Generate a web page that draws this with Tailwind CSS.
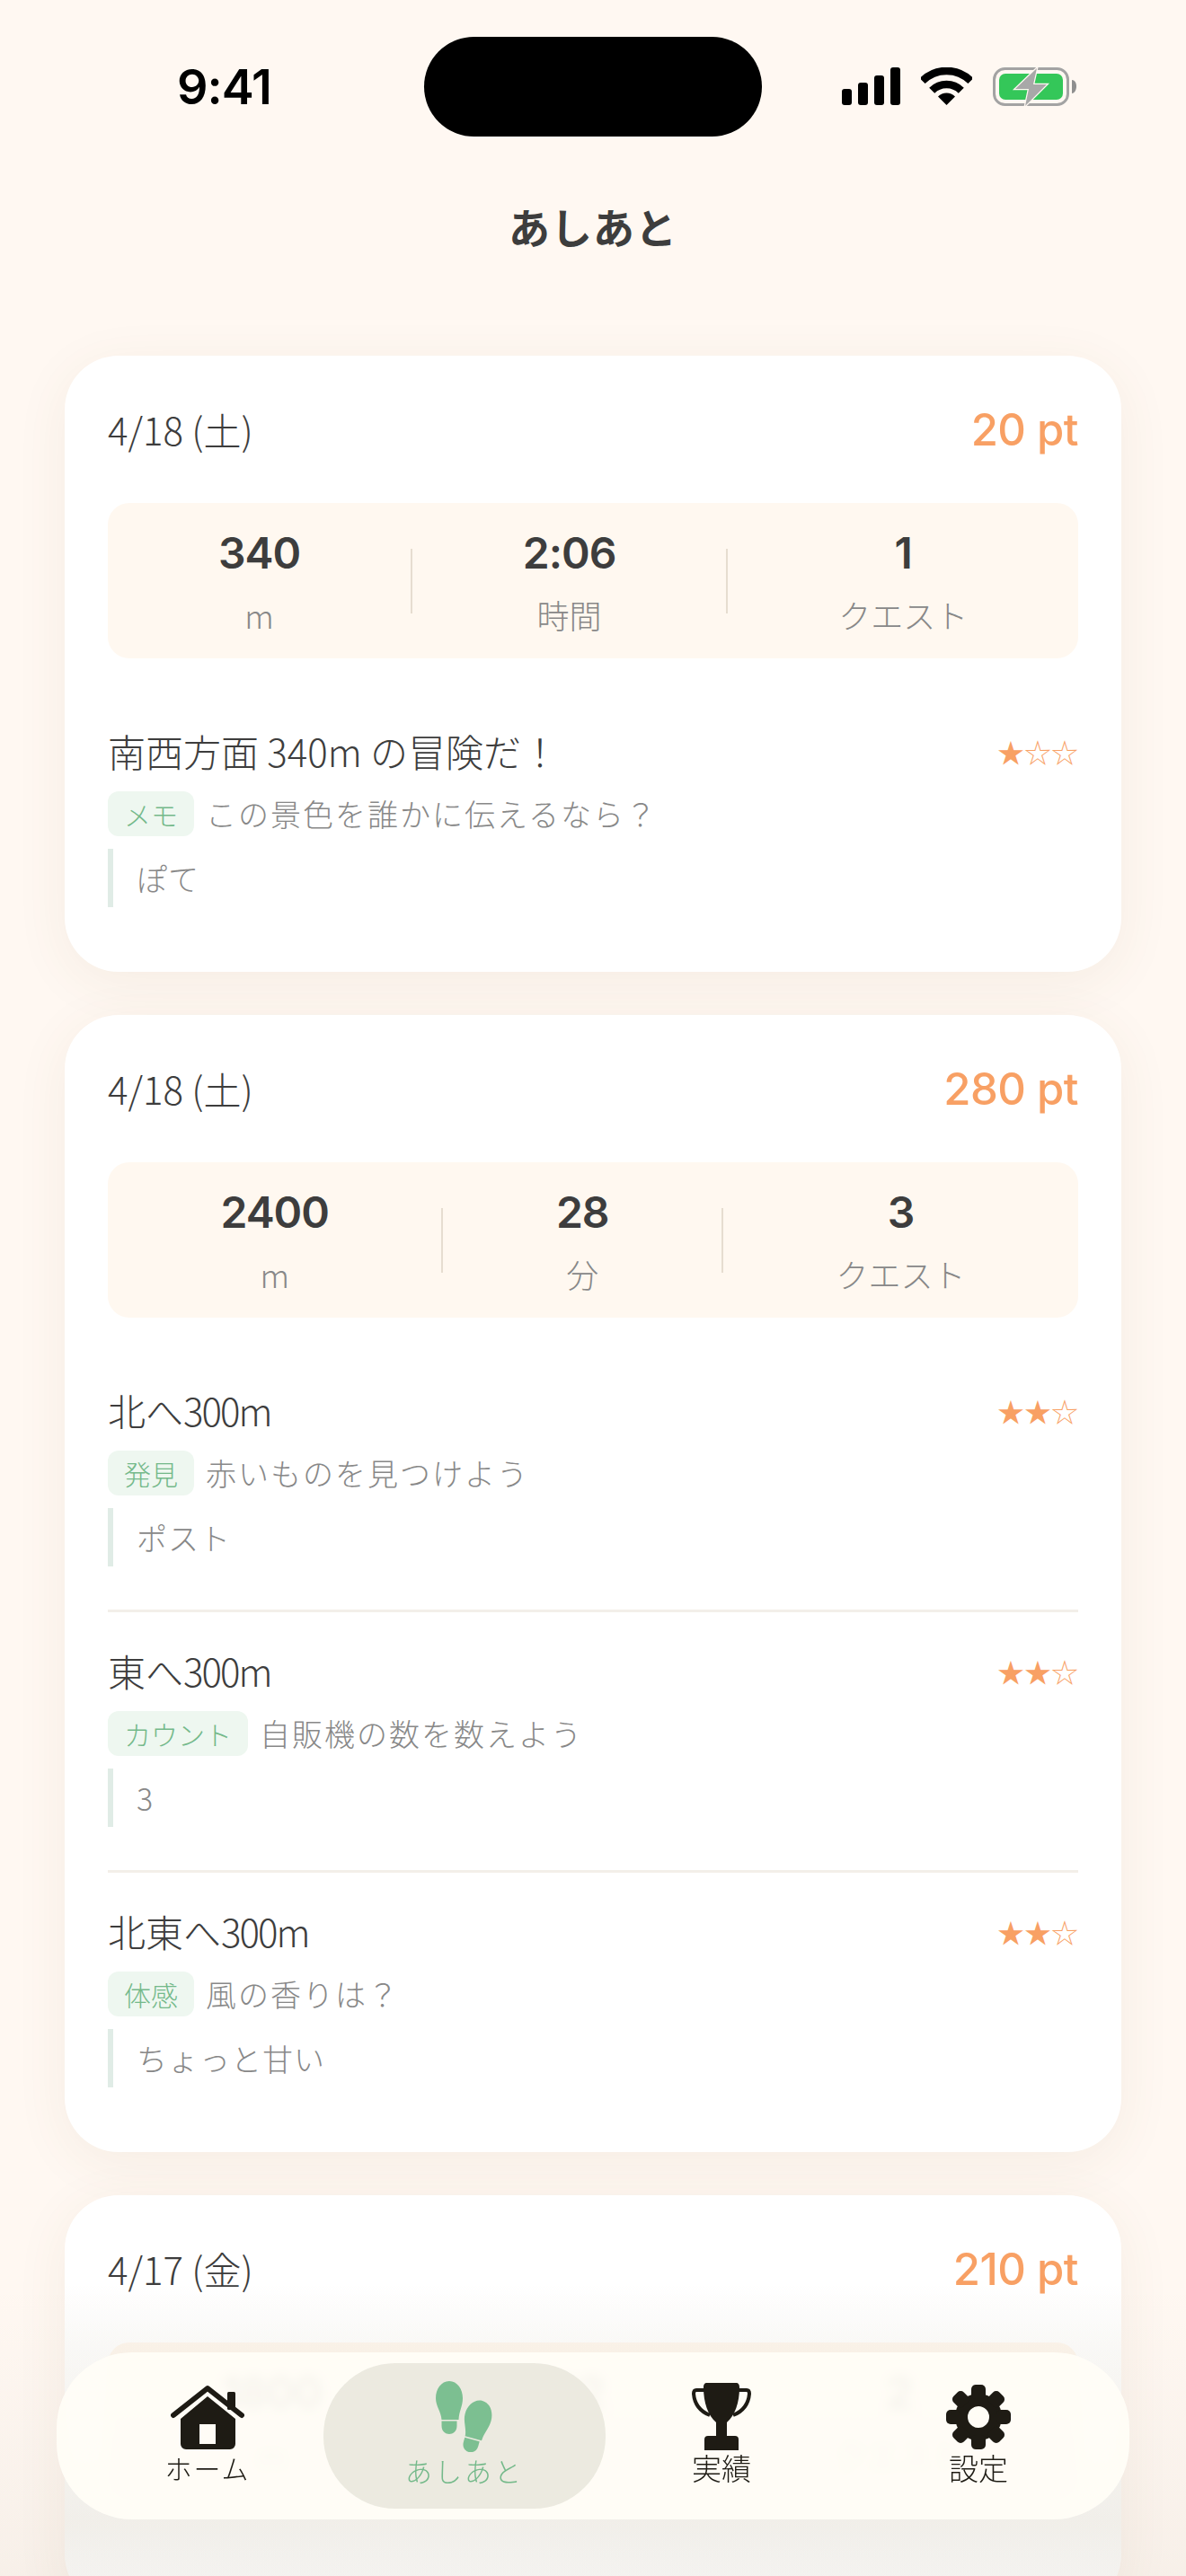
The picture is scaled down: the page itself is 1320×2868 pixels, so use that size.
<!DOCTYPE html>
<html lang="ja">
<head>
    <meta charset="UTF-8">
    <meta name="viewport" content="width=device-width, initial-scale=1.0">
    <title>あしあと</title>
    <script src="https://cdn.jsdelivr.net/npm/@tailwindcss/browser@4"></script>
</head>
<body class="bg-[#fff8f2]">
<div class="relative w-[1320px] h-[2868px] overflow-hidden bg-[#fff8f2] text-[#3d3d3d] font-['Noto_Sans_CJK_JP',sans-serif] font-light">

    <!-- status bar -->
    <div class="flex pt-[41px] h-[152px]">
        <div class="w-[472px] pt-[22px] pl-[197px] text-[54px] leading-[68px] font-semibold text-black font-['Inter',sans-serif] tracking-[-1px]">9:41</div>
        <div class="w-[376px] h-[111px] rounded-full bg-black"></div>
        <div class="flex pt-[34px] pl-[89px] h-[80px]">
            <svg class="mr-[23px]" width="65" height="42" viewBox="0 0 65 42" fill="#000">
                <rect x="0" y="24" width="11" height="18" rx="3"/>
                <rect x="18" y="17" width="11" height="25" rx="3"/>
                <rect x="36" y="9" width="11" height="33" rx="3"/>
                <rect x="54" y="0" width="11" height="42" rx="3"/>
            </svg>
            <svg class="mr-[23px]" width="57" height="42" viewBox="0 0 57 42">
                <path d="M1.6 15.1A38 38 0 0 1 55.4 15.1" fill="none" stroke="#000" stroke-width="8.5"/>
                <path d="M12.2 25.7A23 23 0 0 1 44.8 25.7" fill="none" stroke="#000" stroke-width="8.5"/>
                <path d="M28.5 42L19 32.5A13.5 13.5 0 0 1 38 32.5Z" fill="#000"/>
            </svg>
            <svg width="94" height="44" viewBox="0 0 94 44">
                <rect x="1.5" y="1.5" width="82" height="40" rx="12" fill="none" stroke="#a3a3a3" stroke-width="3"/>
                <rect x="7" y="7" width="71" height="29" rx="7" fill="#34c759"/>
                <path d="M88 14c3 0 5 3 5 7s-2 8-5 8Z" fill="#8f8f8f"/>
                <path d="M49 1L25 24H40L36 43L60 19H45Z" fill="#a8a8a8" stroke="#fff8f2" stroke-width="2.5" paint-order="stroke"/>
            </svg>
        </div>
    </div>

    <h1 class="mt-[68px] h-[64px] text-center text-[46px] leading-[62px] font-bold text-[#3d3d3d] tracking-[1px]">あしあと</h1>

    <!-- list -->
    <div class="mt-[112px] mx-[72px] flex flex-col gap-[48px]">

        <section class="bg-white rounded-[60px] px-[48px] pt-[48px] pb-[72px] shadow-[0_12px_60px_rgba(120,80,40,0.07)]">
            <div class="flex justify-between items-center h-[70px]">
                <span class="text-[42px] leading-[60px] pb-[3px]">4/18 (土)</span>
                <span class="text-[49px] leading-[70px] font-medium text-[#f8a064] font-['Inter',sans-serif] tracking-[-0.5px]">20 pt</span>
            </div>
            <div class="mt-[46px] h-[173px] rounded-[24px] bg-[#fff8f0] flex items-center">
                <div class="grow text-center">
                    <p class="text-[48px] leading-[60px] font-semibold tracking-[-1px] font-['Inter',sans-serif]">340</p>
                    <p class="mt-[15px] text-[36px] leading-[46px] text-[#888888]">m</p>
                </div>
                <div class="w-[2px] h-[72px] bg-[#e6ddd0]"></div>
                <div class="grow text-center">
                    <p class="text-[48px] leading-[60px] font-semibold tracking-[-1px] font-['Inter',sans-serif]">2:06</p>
                    <p class="mt-[15px] text-[36px] leading-[46px] text-[#888888]">時間</p>
                </div>
                <div class="w-[2px] h-[72px] bg-[#e6ddd0]"></div>
                <div class="grow text-center">
                    <p class="text-[48px] leading-[60px] font-semibold tracking-[-1px] font-['Inter',sans-serif]">1</p>
                    <p class="mt-[15px] text-[36px] leading-[46px] text-[#888888]">クエスト</p>
                </div>
            </div>
            <div class="mt-[36px] pt-[42px]">
                <div class="flex justify-between items-start h-[60px]">
                    <span class="text-[42px] leading-[50px]">南西方面 340m の冒険だ！</span>
                    <span class="text-[30px] leading-[50px] text-[#f8a064]">★☆☆</span>
                </div>
                <div class="mt-[10px] h-[50px] flex items-center gap-[13px]">
                    <span class="h-[50px] px-[18px] rounded-[12px] bg-[#eef7f0] text-[#74b98a] text-[30px] leading-[50px]">メモ</span>
                    <span class="text-[34px] leading-[50px] tracking-[2px] text-[#888888]">この景色を誰かに伝えるなら？</span>
                </div>
                <div class="mt-[14px] h-[65px] border-l-[6px] border-[#e0ece6] pl-[26px] text-[34px] leading-[65px] tracking-[1px] text-[#888888]">ぽて</div>
            </div>
        </section>

        <section class="bg-white rounded-[60px] px-[48px] pt-[48px] pb-[72px] shadow-[0_12px_60px_rgba(120,80,40,0.07)]">
            <div class="flex justify-between items-center h-[70px]">
                <span class="text-[42px] leading-[60px] pb-[3px]">4/18 (土)</span>
                <span class="text-[49px] leading-[70px] font-medium text-[#f8a064] font-['Inter',sans-serif] tracking-[-0.5px]">280 pt</span>
            </div>
            <div class="mt-[46px] h-[173px] rounded-[24px] bg-[#fff8f0] flex items-center">
                <div class="grow text-center">
                    <p class="text-[48px] leading-[60px] font-semibold tracking-[-1px] font-['Inter',sans-serif]">2400</p>
                    <p class="mt-[15px] text-[36px] leading-[46px] text-[#888888]">m</p>
                </div>
                <div class="w-[2px] h-[72px] bg-[#e6ddd0]"></div>
                <div class="grow text-center">
                    <p class="text-[48px] leading-[60px] font-semibold tracking-[-1px] font-['Inter',sans-serif]">28</p>
                    <p class="mt-[15px] text-[36px] leading-[46px] text-[#888888]">分</p>
                </div>
                <div class="w-[2px] h-[72px] bg-[#e6ddd0]"></div>
                <div class="grow text-center">
                    <p class="text-[48px] leading-[60px] font-semibold tracking-[-1px] font-['Inter',sans-serif]">3</p>
                    <p class="mt-[15px] text-[36px] leading-[46px] text-[#888888]">クエスト</p>
                </div>
            </div>
            <div class="mt-[36px] pt-[42px] pb-[48px] border-b-[3px] border-[#f3efe9]">
                <div class="flex justify-between items-start h-[60px]">
                    <span class="text-[42px] leading-[50px]">北へ<span class="tracking-[-2px]">300m</span></span>
                    <span class="text-[30px] leading-[50px] text-[#f8a064]">★★☆</span>
                </div>
                <div class="mt-[10px] h-[50px] flex items-center gap-[13px]">
                    <span class="h-[50px] px-[18px] rounded-[12px] bg-[#eef7f0] text-[#74b98a] text-[30px] leading-[50px]">発見</span>
                    <span class="text-[34px] leading-[50px] tracking-[2px] text-[#888888]">赤いものを見つけよう</span>
                </div>
                <div class="mt-[14px] h-[65px] border-l-[6px] border-[#e0ece6] pl-[26px] text-[34px] leading-[65px] tracking-[1px] text-[#888888]">ポスト</div>
            </div>
            <div class="pt-[40px] pb-[48px] border-b-[3px] border-[#f3efe9]">
                <div class="flex justify-between items-start h-[60px]">
                    <span class="text-[42px] leading-[50px]">東へ<span class="tracking-[-2px]">300m</span></span>
                    <span class="text-[30px] leading-[50px] text-[#f8a064]">★★☆</span>
                </div>
                <div class="mt-[10px] h-[50px] flex items-center gap-[13px]">
                    <span class="h-[50px] px-[18px] rounded-[12px] bg-[#eef7f0] text-[#74b98a] text-[30px] leading-[50px]">カウント</span>
                    <span class="text-[34px] leading-[50px] tracking-[2px] text-[#888888]">自販機の数を数えよう</span>
                </div>
                <div class="mt-[14px] h-[65px] border-l-[6px] border-[#e0ece6] pl-[26px] text-[34px] leading-[65px] tracking-[1px] text-[#888888]">3</div>
            </div>
            <div class="pt-[40px]">
                <div class="flex justify-between items-start h-[60px]">
                    <span class="text-[42px] leading-[50px]">北東へ<span class="tracking-[-2px]">300m</span></span>
                    <span class="text-[30px] leading-[50px] text-[#f8a064]">★★☆</span>
                </div>
                <div class="mt-[10px] h-[50px] flex items-center gap-[13px]">
                    <span class="h-[50px] px-[18px] rounded-[12px] bg-[#eef7f0] text-[#74b98a] text-[30px] leading-[50px]">体感</span>
                    <span class="text-[34px] leading-[50px] tracking-[2px] text-[#888888]">風の香りは？</span>
                </div>
                <div class="mt-[14px] h-[65px] border-l-[6px] border-[#e0ece6] pl-[26px] text-[34px] leading-[65px] tracking-[1px] text-[#888888]">ちょっと甘い</div>
            </div>
        </section>

        <section class="relative h-[460px] bg-white rounded-[60px] px-[48px] pt-[48px] shadow-[0_12px_60px_rgba(120,80,40,0.07)]">
            <div class="flex justify-between items-center h-[70px]">
                <span class="text-[42px] leading-[60px] pb-[3px]">4/17 (金)</span>
                <span class="text-[49px] leading-[70px] font-medium text-[#f8a064] font-['Inter',sans-serif] tracking-[-0.5px]">210 pt</span>
            </div>
            <div class="mt-[46px] h-[173px] rounded-[24px] bg-[#fff8f0] flex items-center">
                <div class="grow text-center">
                    <p class="text-[48px] leading-[60px] font-semibold tracking-[-1px] font-['Inter',sans-serif]">1800</p>
                    <p class="mt-[15px] text-[36px] leading-[46px] text-[#888888]">m</p>
                </div>
                <div class="w-[2px] h-[72px] bg-[#e6ddd0]"></div>
                <div class="grow text-center">
                    <p class="text-[48px] leading-[60px] font-semibold tracking-[-1px] font-['Inter',sans-serif]">22</p>
                    <p class="mt-[15px] text-[36px] leading-[46px] text-[#888888]">分</p>
                </div>
                <div class="w-[2px] h-[72px] bg-[#e6ddd0]"></div>
                <div class="grow text-center">
                    <p class="text-[48px] leading-[60px] font-semibold tracking-[-1px] font-['Inter',sans-serif]">2</p>
                    <p class="mt-[15px] text-[36px] leading-[46px] text-[#888888]">クエスト</p>
                </div>
            </div>
            <!-- fade of the card under the tab bar -->
            <div class="absolute inset-0 rounded-[60px] bg-[linear-gradient(to_bottom,rgba(110,80,0,0)_96px,rgba(110,80,0,0.03)_176px,rgba(110,80,0,0.055)_366px,rgba(110,80,0,0.025)_424px)]"></div>
        </section>
    </div>

    <!-- dimming over the whole width under the tab bar -->
    <div class="absolute inset-x-0 bottom-0 h-[330px] bg-gradient-to-b from-[#3c280a]/0 to-[#3c280a]/4"></div>

    <!-- tab bar -->
    <nav class="absolute left-[63px] top-[2619px] w-[1194px] h-[186px] px-[25px] py-[12px] grid grid-cols-4 rounded-[84px] bg-[#fffdf7]/95 backdrop-blur-[6px] text-[#1e1b14]">
        <a class="flex flex-col items-center pt-[24px]">
            <svg class="shrink-0" width="82" height="72" viewBox="0 0 82 72" fill="#1e1b14">
                <rect x="63" y="8" width="9" height="20" rx="1.5"/>
                <path d="M41 13L72 38V66a6 6 0 0 1-6 6H17a6 6 0 0 1-6-6V38ZM32 44V66H50V44Z" fill-rule="evenodd"/>
                <path d="M3 34L41 4L79 34" fill="none" stroke="#1e1b14" stroke-width="6" stroke-linecap="round" stroke-linejoin="round"/>
            </svg>
            <span class="-mt-[1px] text-[30px] leading-[42px] tracking-[2px]">ホーム</span>
        </a>
        <a class="-mx-[14px] flex flex-col items-center pt-[20px] rounded-[80px] bg-[#eceae0] text-[#74b98a]">
            <svg class="shrink-0" width="64" height="79" viewBox="0 0 64 79" fill="#7cbf91">
                <path d="M15 0C24 0 30 9 30 19C30 28 26 33 25.5 43H6.5C6 34 0 28 0 19C0 9 6 0 15 0Z"/>
                <path d="M6.5 44.5H23.5V50C23.5 56 19 59 15 59C11 59 6.5 56 6.5 50Z"/>
                <g transform="translate(37.5 18.1) rotate(15)">
                    <path d="M15 0C24 0 30 9 30 19C30 28 26 33 25.5 43H6.5C6 34 0 28 0 19C0 9 6 0 15 0Z"/>
                    <path d="M6.5 44.5H23.5V50C23.5 56 19 59 15 59C11 59 6.5 56 6.5 50Z"/>
                </g>
            </svg>
            <span class="-mt-[1px] text-[30px] leading-[42px] tracking-[3px]">あしあと</span>
        </a>
        <a class="flex flex-col items-center pt-[22px]">
            <svg class="shrink-0" width="66" height="75" viewBox="0 0 66 75" fill="#1e1b14">
                <path d="M17 0H49C52 0 53 2 53 5C53 22 48 36 39 44V60H27V44C18 36 13 22 13 5C13 2 14 0 17 0Z"/>
                <path d="M14 8H5C2.5 8 2 10 2 12C3 24 10 32 20 36M52 8H61C63.5 8 64 10 64 12C63 24 56 32 46 36" fill="none" stroke="#1e1b14" stroke-width="4"/>
                <path d="M18 59H48a4 4 0 0 1 4 4V75H14V63a4 4 0 0 1 4-4Z"/>
            </svg>
            <span class="-mt-[2px] text-[33px] leading-[42px]">実績</span>
        </a>
        <a class="flex flex-col items-center pt-[24px]">
            <svg class="shrink-0" width="72" height="72" viewBox="-36 -36 72 72" fill="#1e1b14">
                <circle r="19" fill="none" stroke="#1e1b14" stroke-width="14"/>
                <rect x="-8" y="-36" width="16" height="16" rx="5"/>
                <rect x="-8" y="-36" width="16" height="16" rx="5" transform="rotate(45)"/>
                <rect x="-8" y="-36" width="16" height="16" rx="5" transform="rotate(90)"/>
                <rect x="-8" y="-36" width="16" height="16" rx="5" transform="rotate(135)"/>
                <rect x="-8" y="-36" width="16" height="16" rx="5" transform="rotate(180)"/>
                <rect x="-8" y="-36" width="16" height="16" rx="5" transform="rotate(225)"/>
                <rect x="-8" y="-36" width="16" height="16" rx="5" transform="rotate(270)"/>
                <rect x="-8" y="-36" width="16" height="16" rx="5" transform="rotate(315)"/>
            </svg>
            <span class="-mt-[1px] text-[33px] leading-[42px]">設定</span>
        </a>
    </nav>
</div>
</body>
</html>
